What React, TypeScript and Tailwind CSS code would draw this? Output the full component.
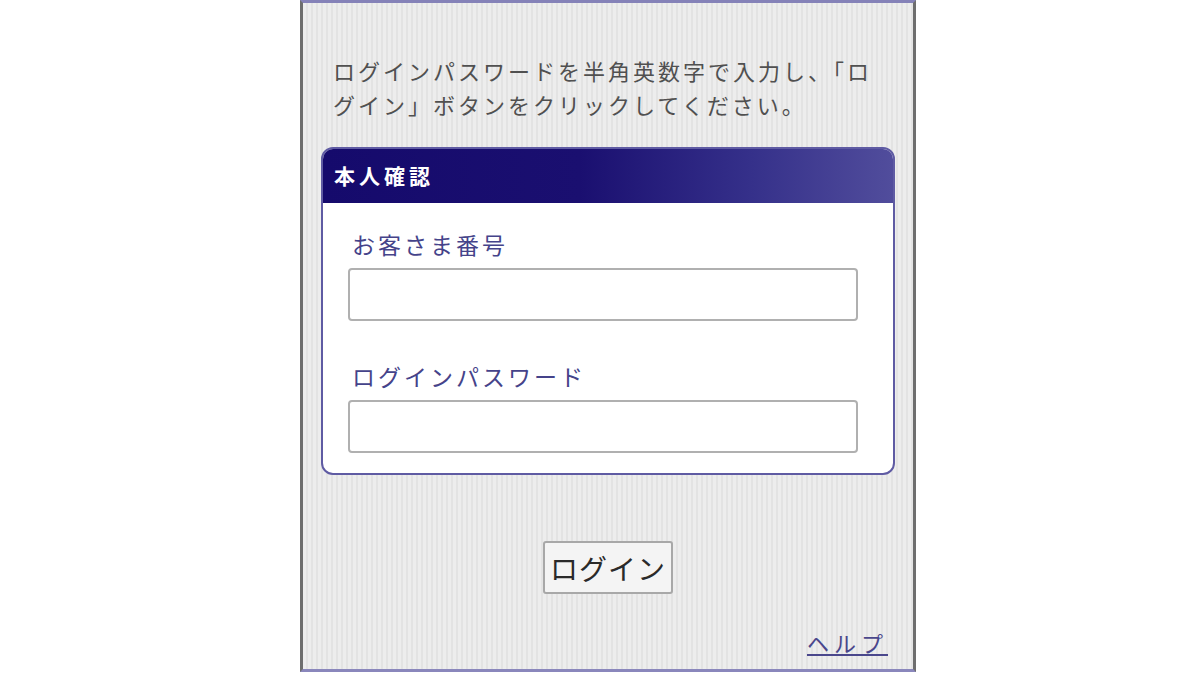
const jp = "font-['Noto_Sans_CJK_JP','Noto_Sans',sans-serif]";

function Field({ label, top }: { label: string; top: string }) {
  return (
    <div className={top}>
      <div className="pl-[29px] text-[23px] leading-[30px] tracking-[3px] text-[#45438a]">{label}</div>
      <div className="ml-[25px] mt-[9px] h-[53px] w-[510px] rounded-[4px] border-2 border-[#b0b0b0] bg-white" />
    </div>
  );
}

export default function App() {
  return (
    <div className={`flex h-[675px] w-full bg-white pl-[300px] ${jp}`}>
      <div className="flex h-[672px] w-[616px] flex-col border-x-[3px] border-t-[3px] border-b-[3px] border-x-[#6e6e6e] border-t-[#8582b8] border-b-[#8a87bc] bg-[repeating-linear-gradient(90deg,#ededed_0px,#ededed_3px,#e3e3e3_3px,#e3e3e3_5px)]">
        <p className="px-[30px] pt-[50px] text-[22px] leading-[34px] tracking-[3px] text-[#505050]">
          ログインパスワードを半角英数字で入力し、「ログイン」ボタンをクリックしてください。
        </p>

        <div className="mx-[18px] mt-[26px] overflow-hidden rounded-[12px] border-2 border-[#5f5ba3] bg-white">
          <div className="flex h-[54px] items-center bg-[linear-gradient(90deg,#150a6c_0%,#1a0f70_45%,#35308a_75%,#514d9c_100%)] pl-[11px] text-[21px] font-bold tracking-[4px] text-white">
            本人確認
          </div>
          <div className="pb-[20px]">
            <Field label="お客さま番号" top="pt-[26px]" />
            <Field label="ログインパスワード" top="pt-[40px]" />
          </div>
        </div>

        <div className="mt-[66px] flex justify-center">
          <button className="h-[53px] w-[130px] rounded-[3px] border-2 border-[#a8a8a8] bg-[#f4f4f4] text-[28px] tracking-[1px] text-[#2a2a2a]">
            ログイン
          </button>
        </div>

        <div className="mt-[36px] flex justify-end pr-[25px]">
          <a href="#" className="text-[22px] leading-[24px] tracking-[5px] text-[#4a478c] underline">
            ヘルプ
          </a>
        </div>
      </div>
    </div>
  );
}
